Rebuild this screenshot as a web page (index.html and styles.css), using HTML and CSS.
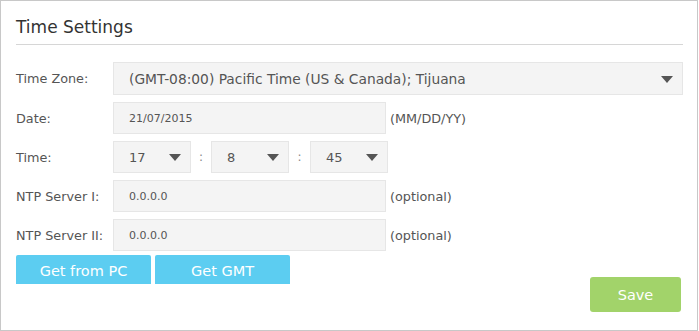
FILE: index.html
```html
<!DOCTYPE html>
<html>
<head>
<meta charset="utf-8">
<link rel="stylesheet" href="styles.css">
</head>
<body>
<div class="panel">
  <h2 class="title">Time Settings</h2>
  <div class="form">
    <div class="row row-tz">
      <label class="label">Time Zone:</label>
      <div class="field select wide">(GMT-08:00) Pacific Time (US &amp; Canada); Tijuana<span class="arrow"></span></div>
    </div>
    <div class="row">
      <label class="label">Date:</label>
      <div class="field input">21/07/2015</div>
      <span class="hint">(MM/DD/YY)</span>
    </div>
    <div class="row">
      <label class="label">Time:</label>
      <div class="field select small">17<span class="arrow"></span></div>
      <span class="colon">:</span>
      <div class="field select small">8<span class="arrow"></span></div>
      <span class="colon">:</span>
      <div class="field select small">45<span class="arrow"></span></div>
    </div>
    <div class="row">
      <label class="label">NTP Server I:</label>
      <div class="field input">0.0.0.0</div>
      <span class="hint">(optional)</span>
    </div>
    <div class="row">
      <label class="label">NTP Server II:</label>
      <div class="field input">0.0.0.0</div>
      <span class="hint">(optional)</span>
    </div>
  </div>
  <div class="footer">
    <div class="btns">
      <button class="btn blue">Get from PC</button>
      <button class="btn blue">Get GMT</button>
    </div>
    <button class="btn save">Save</button>
  </div>
</div>
</body>
</html>
```
FILE: styles.css
```css
* { box-sizing: border-box; }
html, body { margin: 0; padding: 0; background: #fff; }
body { font-family: "DejaVu Sans", Verdana, sans-serif; color: #555; }
.panel {
  width: 698px;
  height: 331px;
  border: 1px solid #c8c8c8;
  padding: 0 14px 0 15px;
}
.title {
  margin: 0;
  padding-top: 16px;
  height: 44px;
  font-size: 17px;
  font-weight: normal;
  line-height: 21px;
  color: #333;
  border-bottom: 1px solid #d6d6d6;
}
.form { padding-top: 17px; display: flex; flex-direction: column; gap: 7px; }
.row { display: flex; align-items: center; height: 32px; }
.row-tz { height: 33px; }
.label { width: 97px; flex: none; font-size: 12.8px; }
.field {
  position: relative;
  height: 100%;
  background: #f4f4f4;
  border: 1px solid #e6e6e6;
  font-size: 12px;
  display: flex;
  align-items: center;
  padding-left: 15px;
  color: #555;
}
.wide { width: 570px; font-size: 13.8px; }
.input { width: 273px; font-size: 11px; }
.small { width: 78px; font-size: 13px; }
.hint { margin-left: 4px; font-size: 12.8px; }
.colon { width: 20px; text-align: center; font-size: 12px; color: #888; }
.row .small + .colon + .small + .colon { width: 21px; }
.arrow {
  position: absolute;
  right: 9px;
  top: 50%;
  margin-top: -3px;
  width: 0; height: 0;
  border-left: 6px solid transparent;
  border-right: 6px solid transparent;
  border-top: 7px solid #555;
}
.footer { display: flex; justify-content: space-between; padding-top: 4px; padding-right: 2px; }
.btns { display: flex; gap: 4px; }
.btn {
  border: none;
  color: #fff;
  font-family: "DejaVu Sans", Verdana, sans-serif;
  padding: 0;
  cursor: pointer;
}
.blue {
  width: 135px;
  height: 29px;
  padding-top: 3px;
  background: #5ccdf1;
  border-radius: 2px 2px 0 0;
  font-size: 14.5px;
}
.save {
  margin-top: 22px;
  width: 91px;
  height: 35px;
  background: #a2d36a;
  border-radius: 3px;
  font-size: 14.5px;
}
```
